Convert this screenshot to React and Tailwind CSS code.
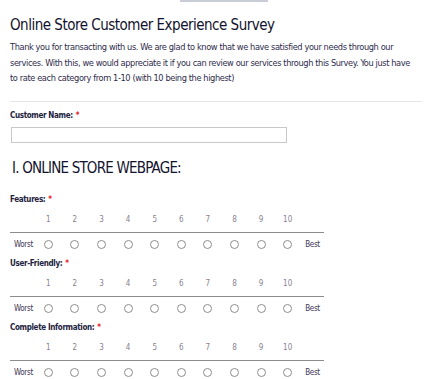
import React from "react";

const font = { fontFamily: '"DejaVu Sans Condensed", "DejaVu Sans", sans-serif' };

const nums = [1, 2, 3, 4, 5, 6, 7, 8, 9, 10];

const Required = () => <span className="text-[#e0262b] ml-[3px]">*</span>;

const RatingQuestion = ({ label }) => (
  <div>
    <div className="h-[14px] leading-[14px] text-[8px] font-bold tracking-[-0.35px] text-[#22223d]">
      {label}:<Required />
    </div>
    <div className="grid w-[314px] grid-cols-[25px_repeat(10,minmax(0,1fr))_23px] pt-[6px] pb-[5px] border-b border-[#8c8c8c] leading-[14px] text-[8px] text-[#8a7f92]">
      <div />
      {nums.map((n) => (
        <div key={n} className="text-center">{n}</div>
      ))}
      <div />
    </div>
    <div className="grid w-[314px] grid-cols-[25px_repeat(10,minmax(0,1fr))_23px] h-[24px] items-center text-[8px] tracking-[-0.3px] text-[#3d3556]">
      <div className="text-right pr-[2px]">Worst</div>
      {nums.map((n) => (
        <div key={n} className="flex justify-center">
          <span className="block w-[9px] h-[9px] rounded-full border border-[#8e8e8e] bg-white" />
        </div>
      ))}
      <div className="text-center">Best</div>
    </div>
  </div>
);

export default function App() {
  return (
    <div className="bg-white w-[432px] h-[379px] overflow-hidden" style={font}>
      <div className="ml-[180px] w-[88px] h-[2px] bg-[#c9cdd8]" />
      <div className="px-[10px]">
        <h1 className="mt-[13px] text-[15px] leading-[20px] tracking-[-0.5px] text-[#12122e]">
          Online Store Customer Experience Survey
        </h1>
        <p className="mt-[4px] text-[9.2px] leading-[15.5px] tracking-[-0.4px] text-[#2e2b4c]">
          Thank you for transacting with us. We are glad to know that we have satisfied your needs through our
          <br />
          services. With this, we would appreciate it if you can review our services through this Survey. You just have
          <br />
          to rate each category from 1-10 (with 10 being the highest)
        </p>
        <div className="mt-[15px] h-px bg-[#e6e6e6]" />

        <div className="mt-[7px] h-[14px] leading-[14px] text-[8px] font-bold tracking-[-0.35px] text-[#22223d]">
          Customer Name:<Required />
        </div>
        <input
          type="text"
          className="block mt-[4px] ml-px w-[276px] h-[16px] border border-[#c8c8c8] bg-white outline-none"
        />

        <h2 className="mt-[15px] text-[15px] leading-[20px] tracking-[-0.8px] uppercase text-[#12122e] pl-[2px]">
          I. Online Store Webpage:
        </h2>

        <div className="mt-[15px]">
          <RatingQuestion label="Features" />
          <RatingQuestion label="User-Friendly" />
          <RatingQuestion label="Complete Information" />
        </div>
      </div>
    </div>
  );
}
